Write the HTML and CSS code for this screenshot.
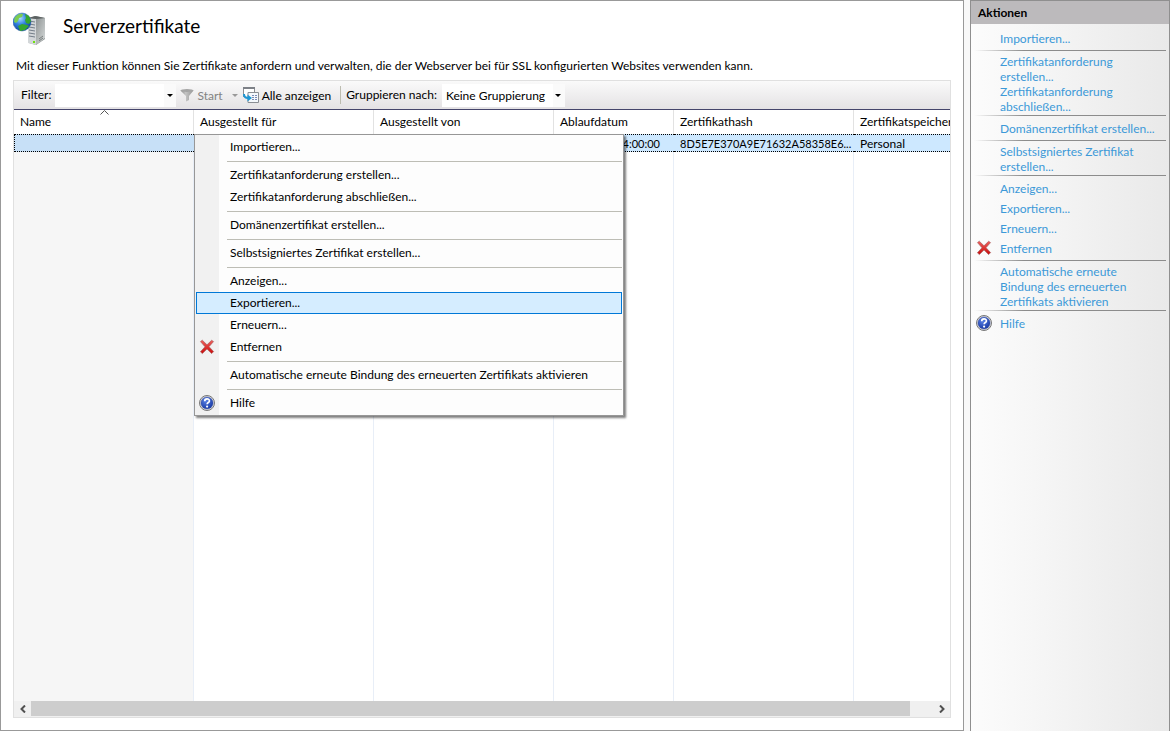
FILE: index.html
```html
<!DOCTYPE html>
<html lang="de">

<head>
  <meta charset="UTF-8">
  <meta name="viewport" content="width=device-width, initial-scale=1.0">
  <title>Serverzertifikate</title>
  <link rel="stylesheet" href="styles.css">
</head>

<body>

  <svg class="defs" width="0" height="0">
    <defs>
      <linearGradient id="red" x1="0" y1="0" x2="0" y2="1">
        <stop offset="0" stop-color="#f0605c"/>
        <stop offset="1" stop-color="#c80c0c"/>
      </linearGradient>
      <radialGradient id="blue" cx="0.4" cy="0.3" r="0.8">
        <stop offset="0" stop-color="#5b83e6"/>
        <stop offset="1" stop-color="#10309c"/>
      </radialGradient>
      <radialGradient id="globe" cx="0.4" cy="0.3" r="0.75">
        <stop offset="0" stop-color="#a8dcff"/>
        <stop offset="0.45" stop-color="#3484e0"/>
        <stop offset="1" stop-color="#0a3a94"/>
      </radialGradient>
      <linearGradient id="side" x1="0" y1="0" x2="1" y2="1">
        <stop offset="0" stop-color="#8f9494"/>
        <stop offset="1" stop-color="#d8dcdc"/>
      </linearGradient>
      <linearGradient id="steel" x1="0" y1="0" x2="1" y2="0">
        <stop offset="0" stop-color="#8d8d8d"/>
        <stop offset="0.4" stop-color="#c4c4c4"/>
        <stop offset="1" stop-color="#969696"/>
      </linearGradient>
      <symbol id="icon-delete" viewBox="0 0 16 16">
        <path d="M1.5 2.6 3.3 1.2 8 5.8 12.6 1.3 14.5 2.6 10 7.7 14.6 12.6 12.6 14.6 8 9.9 3.4 14.6 1.4 12.8 6 7.8z" fill="url(#red)" stroke="#a86060" stroke-width="0.7" stroke-linejoin="round"/>
      </symbol>
      <symbol id="icon-help" viewBox="0 0 16 16">
        <circle cx="8" cy="8" r="7.5" fill="#e4e4e4" stroke="#777" stroke-width="1"/>
        <circle cx="8" cy="8" r="6.1" fill="url(#blue)" stroke="#42549a" stroke-width="0.5"/>
        <path d="M5.7 6.3c0-3.2 4.7-3.1 4.7-.4 0 1.7-2.3 1.6-2.3 3.4" fill="none" stroke="#fff" stroke-width="1.7"/>
        <circle cx="8.1" cy="11.6" r="1.1" fill="#fff"/>
      </symbol>
    </defs>
  </svg>

  <main>
    <header>
      <svg class="logo" width="34" height="34" viewBox="0 0 34 34">
        <path d="M16 6 23 4 32 6 32 27 23 33 16 31z" fill="#8a9090"/>
        <path d="M23 7 32 6 32 26 23 33z" fill="url(#side)"/>
        <path d="M15 6 23 7 23 33 15 31z" fill="#d3d7d9"/>
        <path d="M15 6 22 4 32 6 23 7z" fill="#5c6262"/>
        <path d="M16 9l6 1M16 12l6 1M16 15l6 1M16 18l6 1M16 21l6 1M16 24l6 1" stroke="#737d88" stroke-width="1"/>
        <rect x="20" y="29" width="2" height="2" fill="#6fe010"/>
        <path d="M26 27l4-3M26 29l4-3" stroke="#777d7d" stroke-width="1"/>
        <circle cx="9" cy="10" r="9" fill="url(#globe)" stroke="#2d62a8" stroke-width="0.5"/>
        <path d="M1.500 6C4 2 8 1 10 2L9 5 6 6 5 9 3 11 1 10z" fill="#7ccc50"/>
        <path d="M12 2l4 2 2 5-2 3-3-1-1-3 1-2zM5 14l4-2 5 1 2 1-4 4-5 1z" fill="#35a62e"/>
      </svg>
      <h1>Serverzertifikate</h1>
    </header>
    <p class="intro">Mit dieser Funktion können Sie Zertifikate anfordern und verwalten, die der Webserver bei für SSL konfigurierten Websites verwenden kann.</p>

    <section class="list">
      <div class="toolbar">
        <label for="filter">Filter:</label>
        <div class="combo">
          <input type="text" id="filter">
          <button type="button" class="drop" aria-label="Filter"><span class="arrow"></span></button>
        </div>
        <button type="button" class="tool start" disabled>
          <svg width="14" height="14" viewBox="0 0 14 14"><path d="M.5 2.500h13L9 8v4l-3 1.500V8z" fill="url(#steel)"/><ellipse cx="7" cy="2.500" rx="6.500" ry="1.500" fill="#a5a5a5"/></svg>
          Start
          <span class="arrow"></span>
        </button>
        <button type="button" class="tool">
          <svg width="16" height="16" viewBox="0 0 16 16">
            <path d="M.5 10V.5h11V6" fill="#fff" stroke="#8a8e94"/>
            <path d="M0 1h12" stroke="#7d8187" stroke-width="2"/>
            <path d="M5 5.500h10.500v10H5z" fill="#f4f8fc" stroke="#8a8e94"/>
            <path d="M9 8.500h2m1 0h2M9 10.500h2m1 0h2M9 12.500h2m1 0h2" stroke="#7c8cb8"/>
            <path d="M1 7c0 3 1.500 4 4 4" fill="none" stroke="#1f97d4" stroke-width="2"/>
            <path d="M4.500 7.500 9 11l-4.500 3.500z" fill="#1f97d4"/>
          </svg>
          Alle anzeigen
        </button>
        <span class="divider"></span>
        <label for="group">Gruppieren nach:</label>
        <div class="select">
          <select id="group">
            <option>Keine Gruppierung</option>
          </select>
          <span class="arrow"></span>
        </div>
      </div>

      <div class="grid">
        <table>
          <colgroup>
            <col class="wide"><col class="wide"><col class="wide"><col class="narrow"><col class="wide"><col class="narrow">
          </colgroup>
          <thead>
            <tr>
              <th class="sorted">Name<svg width="9" height="5" viewBox="0 0 9 5"><path d="M.5 4.500l4-4 4 4" fill="none" stroke="#555"/></svg></th>
              <th>Ausgestellt für</th>
              <th>Ausgestellt von</th>
              <th>Ablaufdatum</th>
              <th>Zertifikathash</th>
              <th>Zertifikatspeicher</th>
            </tr>
          </thead>
          <tbody>
            <tr class="selected">
              <td></td>
              <td></td>
              <td></td>
              <td class="number date">04:00:00</td>
              <td class="number">8D5E7E370A9E71632A58358E6...</td>
              <td>Personal</td>
            </tr>
            <tr class="rest">
              <td></td><td></td><td></td><td></td><td></td><td></td>
            </tr>
          </tbody>
        </table>
      </div>

      <div class="scrollbar">
        <button type="button" aria-label="Links"><svg width="6" height="8" viewBox="0 0 6 8"><path d="M5 .5 1.500 4 5 7.500" fill="none" stroke="#505050" stroke-width="2"/></svg></button>
        <div class="track"><div class="thumb"></div></div>
        <button type="button" aria-label="Rechts"><svg width="6" height="8" viewBox="0 0 6 8"><path d="M1 .5 4.500 4 1 7.500" fill="none" stroke="#505050" stroke-width="2"/></svg></button>
      </div>
    </section>

    <div class="menu">
      <button type="button">Importieren...</button>
      <hr>
      <button type="button">Zertifikatanforderung erstellen...</button>
      <button type="button">Zertifikatanforderung abschließen...</button>
      <hr>
      <button type="button">Domänenzertifikat erstellen...</button>
      <hr>
      <button type="button">Selbstsigniertes Zertifikat erstellen...</button>
      <hr>
      <button type="button">Anzeigen...</button>
      <button type="button" class="active">Exportieren...</button>
      <button type="button">Erneuern...</button>
      <button type="button"><svg width="16" height="16"><use href="#icon-delete"/></svg>Entfernen</button>
      <hr>
      <button type="button">Automatische erneute Bindung des erneuerten Zertifikats aktivieren</button>
      <hr>
      <button type="button"><svg width="16" height="16"><use href="#icon-help"/></svg>Hilfe</button>
    </div>
  </main>

  <aside>
    <h2>Aktionen</h2>
    <nav>
      <a href="#">Importieren...</a>
      <hr>
      <a href="#" class="long">Zertifikatanforderung erstellen...</a>
      <a href="#" class="long">Zertifikatanforderung abschließen...</a>
      <hr>
      <a href="#">Domänenzertifikat erstellen...</a>
      <hr>
      <a href="#" class="long">Selbstsigniertes Zertifikat erstellen...</a>
      <hr>
      <a href="#">Anzeigen...</a>
      <a href="#">Exportieren...</a>
      <a href="#">Erneuern...</a>
      <a href="#"><svg width="16" height="16"><use href="#icon-delete"/></svg>Entfernen</a>
      <hr>
      <a href="#" class="long">Automatische erneute Bindung des erneuerten Zertifikats aktivieren</a>
      <hr>
      <a href="#"><svg width="16" height="16"><use href="#icon-help"/></svg>Hilfe</a>
    </nav>
  </aside>

</body>

</html>
```

FILE: styles.css
```css
* {
  box-sizing: border-box;
}

body {
  margin: 0;
  height: 100vh;
  display: flex;
  gap: 6px;
  background: #f8f8f8;
  color: #000;
  font-family: Lato, "Open Sans", sans-serif;
  font-size: 12px;
  line-height: 15px;
}

button,
input,
select {
  font: inherit;
  color: inherit;
  margin: 0;
  padding: 0;
  border: none;
  background: none;
}

.defs {
  position: absolute;
}

main {
  flex: 1;
  min-width: 0;
  position: relative;
  display: flex;
  flex-direction: column;
  padding: 11px 12px 12px;
  background: #fff;
  border: 1px solid #999;
}

header {
  display: flex;
  gap: 16px;
}

h1 {
  margin: 0;
  font-size: 19px;
  line-height: 28px;
  font-weight: normal;
}

.intro {
  margin: 12px 3px 7px;
  white-space: nowrap;
}

.list {
  flex: 1;
  min-height: 0;
  display: flex;
  flex-direction: column;
  border: 1px solid #e0e0e0;
}

.toolbar {
  display: flex;
  align-items: center;
  height: 29px;
  padding-left: 7px;
  background: linear-gradient(#fafafa, #e4e2e4);
  border-bottom: 1px solid #45456b;
  white-space: nowrap;
}

.toolbar label {
  padding-bottom: 2px;
}

.combo {
  display: flex;
  width: 121px;
  height: 23px;
  margin: 0 4px;
  background: #fff;
}

.combo input {
  flex: 1;
  min-width: 0;
}

.drop {
  width: 12px;
  background: #fafafa;
}

.arrow {
  display: block;
  width: 0;
  margin: 0 auto;
  border: 3px solid transparent;
  border-top-color: #000;
  border-bottom: none;
}

.tool {
  display: flex;
  align-items: center;
  gap: 3px;
}

.start {
  color: #838383;
  margin-right: 5px;
}

.start .arrow {
  margin-left: 6px;
  border-top-color: #999;
}

.divider {
  width: 1px;
  height: 18px;
  margin: 0 5px 0 9px;
  background: #bdbdb0;
}

.select {
  position: relative;
  margin-left: 5px;
}

.select select {
  appearance: none;
  width: 123px;
  height: 23px;
  padding-left: 4px;
  background: linear-gradient(to right, #fff 111px, #fafafa 111px);
}

.select .arrow {
  position: absolute;
  right: 4px;
  top: 10px;
  pointer-events: none;
}

.grid {
  flex: 1;
  min-height: 0;
  overflow: hidden;
}

table {
  table-layout: fixed;
  width: 960px;
  height: 100%;
  border-collapse: separate;
  border-spacing: 0;
}

.wide {
  width: 180px;
}

.narrow {
  width: 120px;
}

th {
  position: relative;
  height: 24px;
  padding: 0 0 2px 6px;
  border-right: 1px solid #e2e2e2;
  font-weight: normal;
  text-align: left;
  white-space: nowrap;
}

.sorted svg {
  position: absolute;
  left: 86px;
  top: 0;
}

td {
  padding: 0 0 0 6px;
  border-right: 1px solid #e8eef7;
  white-space: nowrap;
}

.selected td {
  height: 18px;
  border-top: 1px dotted #000;
  border-bottom: 1px dotted #000;
  border-right: none;
  background: #cde8ff;
}

.selected td:first-child {
  border-left: 1px dotted #000;
  background: #c7e0f7;
}

.number {
  font-size: 11px;
}

.selected .date {
  padding-right: 14px;
  text-align: right;
}

.rest td:first-child {
  background: #f6f6f6;
}

.scrollbar {
  display: flex;
  height: 16px;
  background: #f0f0f0;
}

.scrollbar button {
  width: 17px;
  display: flex;
  align-items: center;
  justify-content: center;
}

.track {
  flex: 1;
  padding-right: 23px;
}

.thumb {
  height: 15px;
  background: #cdcdcd;
}

.menu {
  position: absolute;
  left: 193px;
  top: 133px;
  width: 430px;
  padding: 1px;
  border: 1px solid #979797;
  background: linear-gradient(to right, #f1f1f1 24px, #fdfdfd 24px);
  box-shadow: 2px 2px 2px rgba(0, 0, 0, 0.5);
}

.menu button {
  position: relative;
  display: block;
  width: 100%;
  height: 22px;
  padding: 0 0 2px 33px;
  border: 1px solid transparent;
  text-align: left;
}

.menu .active {
  background: #d5edff;
  border-color: #0078d7;
}

.menu svg {
  position: absolute;
  left: 2px;
  top: 2px;
}

.menu hr {
  height: 1px;
  margin: 3px 0 2px 31px;
  border: none;
  background: #bdbdb5;
}

aside {
  width: 200px;
  border: 1px solid #8f8f8f;
  border-bottom: none;
  background: linear-gradient(to right, #fcfcfc, #e9e9e9);
}

h2 {
  margin: 0;
  padding: 4px 7px;
  background: #bcbabc;
  font-size: 12px;
  line-height: 15px;
}

nav {
  padding-top: 5px;
}

nav a {
  position: relative;
  display: block;
  padding: 2px 12px 3px 29px;
  color: #3c99d8;
  text-decoration: none;
}

nav .long {
  padding: 0 35px 0 29px;
}

nav svg {
  position: absolute;
  left: 5px;
  top: 1px;
}

nav hr {
  height: 1px;
  margin: 1px 3px 3px;
  border: none;
  background: linear-gradient(to right, transparent, #8c8c8c 50px);
}
```
